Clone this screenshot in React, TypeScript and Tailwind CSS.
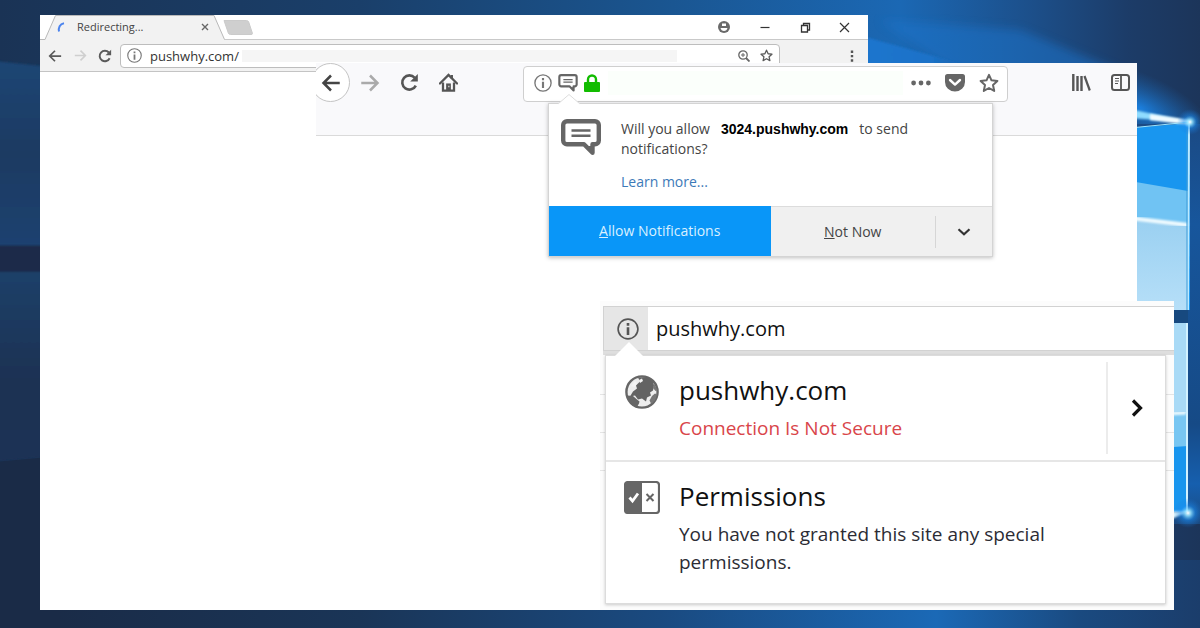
import type { ReactNode } from 'react';

type IconProps = { className?: string };

const UI_FONT = "font-['Open_Sans','Noto_Sans',sans-serif]";

function Wallpaper() {
  return (
    <svg
      className="absolute inset-0 h-full w-full"
      viewBox="0 0 1200 628"
      preserveAspectRatio="none"
      aria-hidden="true"
    >
      <defs>
        <linearGradient id="base" x1="0" x2="1" y1="0" y2="0">
          <stop offset="0" stopColor="#1a3355" />
          <stop offset="0.3" stopColor="#1a3f6a" />
          <stop offset="0.55" stopColor="#1a5590" />
          <stop offset="0.75" stopColor="#1b68b4" />
          <stop offset="0.86" stopColor="#1c4f8a" />
          <stop offset="0.94" stopColor="#1c3c68" />
          <stop offset="1" stopColor="#1c355a" />
        </linearGradient>
        <linearGradient id="bottom" x1="0" x2="1" y1="0" y2="0">
          <stop offset="0" stopColor="#1a2a45" />
          <stop offset="0.3" stopColor="#1a3557" />
          <stop offset="0.55" stopColor="#1a4a80" />
          <stop offset="0.78" stopColor="#1b69b6" />
          <stop offset="0.9" stopColor="#1a4a80" />
          <stop offset="1" stopColor="#1b3d6b" />
        </linearGradient>
        <linearGradient id="leftTop" x1="0" x2="0" y1="0" y2="1">
          <stop offset="0" stopColor="#1b4674" />
          <stop offset="0.5" stopColor="#1a3a62" />
          <stop offset="1" stopColor="#1a4270" />
        </linearGradient>
        <linearGradient id="leftBottom" x1="0" x2="0" y1="0" y2="1">
          <stop offset="0" stopColor="#1a4069" />
          <stop offset="0.6" stopColor="#1a3152" />
          <stop offset="1" stopColor="#1a3355" />
        </linearGradient>
        <linearGradient id="rightEdge" x1="0" x2="0" y1="0" y2="1">
          <stop offset="0" stopColor="#1b4a84" />
          <stop offset="0.25" stopColor="#17569c" />
          <stop offset="0.75" stopColor="#164a86" />
          <stop offset="0.9" stopColor="#165fae" />
          <stop offset="1" stopColor="#1b4a80" />
        </linearGradient>
        <linearGradient id="beam" x1="0" x2="1" y1="0" y2="0">
          <stop offset="0" stopColor="#1b76d0" />
          <stop offset="0.7" stopColor="#1b72c8" />
          <stop offset="1" stopColor="#1b68b4" stopOpacity="0" />
        </linearGradient>
        <linearGradient id="paneBottom" x1="0" x2="0" y1="0" y2="1">
          <stop offset="0" stopColor="#9ad0f1" />
          <stop offset="1" stopColor="#b6dff8" />
        </linearGradient>
        <radialGradient id="glow">
          <stop offset="0" stopColor="#ffffff" />
          <stop offset="0.2" stopColor="#8fe0ff" stopOpacity="0.85" />
          <stop offset="0.5" stopColor="#1b8cf0" stopOpacity="0.5" />
          <stop offset="1" stopColor="#1b76d4" stopOpacity="0" />
        </radialGradient>
        <radialGradient id="haze">
          <stop offset="0" stopColor="#1b86ea" stopOpacity="0.9" />
          <stop offset="1" stopColor="#1b6ab8" stopOpacity="0" />
        </radialGradient>
        <filter id="soft">
          <feGaussianBlur stdDeviation="5" />
        </filter>
        <filter id="slight">
          <feGaussianBlur stdDeviation="1" />
        </filter>
      </defs>
      <rect width="1200" height="628" fill="url(#base)" />
      <rect y="560" width="1200" height="68" fill="url(#bottom)" />

      {/* left pane of the dim window */}
      <path d="M-5 61 L60 68 V246 H-5Z" fill="url(#leftTop)" filter="url(#slight)" />
      <path d="M-5 246 H60 V272 H-5Z" fill="#1b2a48" filter="url(#slight)" />
      <path d="M-5 272 H60 V456 L-5 462Z" fill="url(#leftBottom)" filter="url(#slight)" />
      <path d="M-5 462 L60 456 V640 H-5Z" fill="#1a2b47" />

      {/* light rays */}
      <path d="M880 20 L1020 30 L1130 75 L960 75Z" fill="#1b74cc" opacity="0.5" filter="url(#soft)" />
      <path d="M840 30 L970 66 H840Z" fill="url(#beam)" filter="url(#slight)" />
      <ellipse cx="1140" cy="108" rx="80" ry="34" fill="url(#haze)" transform="rotate(24 1140 108)" />

      {/* lit window panes */}
      <rect x="1130" y="124" width="75" height="400" fill="url(#rightEdge)" />
      <path d="M1130 128 L1190 123 V310 H1130Z" fill="#1996ef" />
      <path d="M1130 181 L1188 191 V310 H1130Z" fill="#70c3f3" />
      <path d="M1130 219 L1188 225 V310 H1130Z" fill="url(#paneBottom)" />
      <path d="M1130 218 L1188 225" stroke="#f2fcff" strokeWidth="4" filter="url(#slight)" />
      <path d="M1189 122 L1188 310" stroke="#bdeaff" strokeWidth="2" />
      <path d="M1187 124 V310" stroke="#3b9ad8" strokeWidth="1" />
      <path d="M1130 310 H1188 V323 H1130Z" fill="#17497f" />
      <path d="M1130 323 H1188 V512 H1130Z" fill="#a9daf6" />
      <path d="M1130 416 L1188 413 V512 H1130Z" fill="#78c6f2" />
      <path d="M1130 450 L1188 446 V512 H1130Z" fill="#1895ee" />
      <path d="M1130 416 L1186 413" stroke="#effbff" strokeWidth="3" filter="url(#slight)" />
      <path d="M1187 323 V512" stroke="#d2f2ff" strokeWidth="2" />
      <path d="M1130 109 L1190 122 L1130 118Z" fill="#8fdcff" filter="url(#slight)" />
      <path d="M1150 114 L1190 120 V125 L1150 120Z" fill="#f0fbff" filter="url(#slight)" />
      <path d="M1130 128 L1190 122" stroke="#9fe6ff" strokeWidth="1" />
      <path d="M1160 524 L1190 511 L1160 512Z" fill="#e5faff" filter="url(#slight)" />
      <circle cx="1190" cy="122" r="13" fill="url(#glow)" />
      <circle cx="1188" cy="513" r="15" fill="url(#glow)" />
    </svg>
  );
}

function Svg({
  className,
  box = '0 0 16 16',
  children,
}: IconProps & { box?: string; children: ReactNode }) {
  return (
    <svg className={`block shrink-0 ${className}`} viewBox={box} fill="none" aria-hidden="true">
      {children}
    </svg>
  );
}

function ArrowLeft({ className }: IconProps) {
  return (
    <Svg className={className}>
      <path d="M15 8H2M8 2 2 8l6 6" stroke="currentColor" strokeWidth="2" />
    </Svg>
  );
}

function ArrowRight({ className }: IconProps) {
  return (
    <Svg className={className}>
      <path d="M1 8h13M8 2l6 6-6 6" stroke="currentColor" strokeWidth="2" />
    </Svg>
  );
}

function Reload({ className }: IconProps) {
  return (
    <Svg className={className}>
      <path d="M13.3 10.6A6 6 0 1 1 12.4 4" stroke="currentColor" strokeWidth="2.2" />
      <path d="M15 0.8V7.2H8.6Z" fill="currentColor" />
    </Svg>
  );
}

function InfoCircle({ className }: IconProps) {
  return (
    <Svg className={className}>
      <circle cx="8" cy="8" r="7.2" stroke="currentColor" strokeWidth="1.2" />
      <path d="M8 3.6v2M8 6.8v5.6" stroke="currentColor" strokeWidth="1.9" />
    </Svg>
  );
}

function Star({ className }: IconProps) {
  return (
    <Svg className={className} box="0 0 20 20">
      <path
        d="m10 1.8 2.5 5.5 5.9.7-4.4 4 1.2 5.9L10 15l-5.2 2.9L6 12 1.6 8l5.9-.7Z"
        stroke="currentColor"
        strokeWidth="2"
        strokeLinejoin="round"
      />
    </Svg>
  );
}

function SpeechBubble({ className }: IconProps) {
  return (
    <Svg className={className} box="0 0 40 37">
      <path
        d="M6 2.2h28a3.8 3.8 0 0 1 3.8 3.8v15.5a3.8 3.8 0 0 1-3.8 3.8h-2.5v8.500l-8.500-8.500H6a3.8 3.8 0 0 1-3.8-3.8V6A3.8 3.8 0 0 1 6 2.2Z"
        stroke="currentColor"
        strokeWidth="4.4"
        strokeLinejoin="round"
      />
      <path d="M26 27h5.500v7Z" fill="currentColor" />
      <path d="M10.5 11.5h19M10.5 16.8h19" stroke="currentColor" strokeWidth="2.4" />
    </Svg>
  );
}

function Globe({ className }: IconProps) {
  return (
    <Svg className={className} box="0 0 34 34">
      <circle cx="17" cy="17" r="15.6" fill="#ededed" stroke="#666" strokeWidth="2.4" />
      <path
        d="M13 2.5 22 2l6 4.5 1 4-1 5-3 2 1 3-4 2-1 4-4-3-4 1-3-4-5 1 3-5 4-3-1-3 4-4Z"
        fill="#636363"
      />
      <path d="m14 5 3-1.500L18 6l-3 2ZM6 11l4-5 2 2-2 4Z" fill="#f4f4f4" />
      <path d="M2.500 20.500l5.500.5 4 3.500 2.500 2-.5 2-2 3.500-5-2-4-5Z" fill="#666" />
      <path d="M27 21l3-2.500 2 1-2 6-4 3-1.500-3Z" fill="#777" />
      <path d="M29 8.500 32.500 15l-2 1-2.500-3Z" fill="#777" />
    </Svg>
  );
}

function ChromeWindow() {
  return (
    <section
      className={`absolute top-[15px] right-[332px] bottom-[18px] left-10 bg-white text-[#5a5a5a] ${UI_FONT}`}
    >
      <div className="flex h-[25px] items-center border-b border-[#c9c9c9]">
        <div className="relative flex h-[25px] w-[185px] shrink-0 items-center px-4">
          <svg className="absolute inset-0" width="185" height="25" viewBox="0 0 185 25" aria-hidden="true">
            <path d="M0 24.5H5L15.5 0H174L184.5 24.5V25H0Z" fill="#f2f2f2" />
            <path d="M0 24.5H5L15.5 0.5H174L184.5 24.5" fill="none" stroke="#b9b9b9" />
          </svg>
          <Svg className="relative size-3" box="0 0 12 12">
            <path d="M3 10.5C2.2 7 3.8 3 8 2.3" stroke="#4c84ee" strokeWidth="2" />
          </Svg>
          <span className="relative ml-[9px] flex-1 text-[11px] leading-4 text-[#444]">Redirecting...</span>
          <button type="button" aria-label="Close tab" className="relative">
            <Svg className="size-2" box="0 0 8 8">
              <path d="m1 1 6 6m0-6-6 6" stroke="#666" strokeWidth="1.4" />
            </Svg>
          </button>
        </div>
        <button type="button" aria-label="New tab" className="-ml-0.5 shrink-0">
          <Svg className="h-[15px] w-[30px]" box="0 0 30 15">
            <path
              d="M1 .5H23.5Q25 .5 25.7 2L29.5 13.5Q29.5 14.5 28 14.5H7.5Q6 14.5 5.300 13Z"
              fill="#cfcfcf"
              stroke="#cacaca"
            />
          </Svg>
        </button>
        <div className="ml-auto flex items-center gap-7 pr-[18px] text-[#333]">
          <button type="button" aria-label="Profile">
            <Svg className="size-3" box="0 0 12 12">
              <circle cx="6" cy="6" r="6" fill="#6a6a6a" />
              <path d="M4 2.500h4v2.500H4Z" fill="#fff" />
              <path d="M2.500 7h7q-.8 3-3.500 3T2.500 7Z" fill="#fff" />
            </Svg>
          </button>
          <button type="button" aria-label="Minimize" className="px-0.5">
            <Svg className="size-[10px]" box="0 0 10 10">
              <path d="M.5 5.5h9" stroke="currentColor" strokeWidth="1.2" />
            </Svg>
          </button>
          <button type="button" aria-label="Restore">
            <Svg className="size-[11px]" box="0 0 11 11">
              <path d="M1.5 3.5h6v6.5h-6ZM3.5 3.5v-2h6v6.5h-2" stroke="currentColor" strokeWidth="1.3" />
            </Svg>
          </button>
          <button type="button" aria-label="Close">
            <Svg className="size-[11px]" box="0 0 11 11">
              <path d="m1 1 9 9m0-9-9 9" stroke="currentColor" strokeWidth="1.2" />
            </Svg>
          </button>
        </div>
      </div>

      <div className="flex h-8 items-center border-b border-[#c4c4c4] bg-[#f2f2f2] pl-2">
        <button type="button" aria-label="Back">
          <ArrowLeft className="size-[14px]" />
        </button>
        <button type="button" aria-label="Forward" className="ml-3 text-[#cfcfcf]">
          <ArrowRight className="size-[13px]" />
        </button>
        <button type="button" aria-label="Reload" className="ml-[11px]">
          <Reload className="size-[14px]" />
        </button>
        <div className="ml-2 flex h-6 flex-1 items-center rounded-sm border border-[#bdbdbd] bg-white px-1.5">
          <InfoCircle className="size-[15px] text-[#777]" />
          <input
            aria-label="Address"
            defaultValue="pushwhy.com/"
            className="ml-2 w-[92px] bg-transparent text-[13px] leading-5 text-[#333] outline-none"
          />
          <span className="h-3 flex-1 bg-[#f5f5f5]" />
          <button type="button" aria-label="Zoom" className="ml-[61px]">
            <Svg className="size-3" box="0 0 12 12">
              <circle cx="5" cy="5" r="4.2" stroke="#666" strokeWidth="1.3" />
              <path d="M8 8l3.5 3.5" stroke="#666" strokeWidth="1.8" />
              <path d="M3 5h4M5 3v4" stroke="#666" />
            </Svg>
          </button>
          <button type="button" aria-label="Bookmark" className="ml-2.5">
            <Star className="size-[13px]" />
          </button>
        </div>
        <button type="button" aria-label="Menu" className="mr-[14px] ml-[70px]">
          <Svg className="h-3 w-1" box="0 0 4 12">
            <path d="M.8.5h2.4v2.4H.8ZM.8 4.900h2.4v2.4H.8ZM.8 9.300h2.4v2.4H.8Z" fill="#555" />
          </Svg>
        </button>
      </div>
    </section>
  );
}

function NotificationPrompt() {
  return (
    <div
      role="dialog"
      aria-label="Notification permission"
      className="absolute top-10 right-36 left-[232px] border border-[#d4d4d4] bg-white text-sm text-[#444] shadow-[0_1px_4px_rgba(0,0,0,0.25)]"
    >
      <svg className="absolute -top-[10px] left-[9px]" width="22" height="11" viewBox="0 0 22 11" aria-hidden="true">
        <path d="M0 10 11 0l11 10v1H0Z" fill="#fff" />
        <path d="M0 10 11 .5 22 10" fill="none" stroke="#ddd" />
      </svg>
      <div className="flex pt-[15px] pb-3.5 pl-3">
        <SpeechBubble className="h-[37px] w-10 text-[#666]" />
        <div className="ml-5">
          <p className="flex gap-x-[11px] leading-5">
            <span>Will you allow</span>
            <b className="font-['Liberation_Sans',Arial,sans-serif] text-black">3024.pushwhy.com</b>
            <span>to send</span>
          </p>
          <p className="leading-5">notifications?</p>
          <a href="#learn-more" className="mt-[13px] block leading-5 text-[#3d7ab8]">
            Learn more...
          </a>
        </div>
      </div>
      <div className="flex h-[50px] bg-[#f0f0f0]">
        <button type="button" className="flex-1 bg-[#0996f8] text-[#d9f0ff]">
          <u>A</u>llow Notifications
        </button>
        <div className="flex flex-1 items-center border-t border-[#dcdcdc]">
          <button type="button" className="h-full flex-1">
            <u>N</u>ot Now
          </button>
          <button
            type="button"
            aria-label="More options"
            className="flex h-8 w-[57px] items-center justify-center border-l border-[#d6d6d6]"
          >
            <Svg className="h-2 w-3.5" box="0 0 14 8">
              <path d="m1.5 1.2 5.5 5 5.5-5" stroke="#333" strokeWidth="2.2" />
            </Svg>
          </button>
        </div>
      </div>
    </div>
  );
}

function FirefoxWindow() {
  return (
    <section className={`absolute top-[63px] right-[63px] left-[316px] h-[260px] bg-white text-[#555] ${UI_FONT}`}>
      <div className="flex h-[73px] items-start overflow-hidden border-b border-[#dadada] bg-[#f9f9fb]">
        <button
          type="button"
          aria-label="Back"
          className="-ml-[5px] flex size-[39px] shrink-0 items-center justify-center rounded-full border border-[#c4c4c4] bg-white text-[#444]"
        >
          <ArrowLeft className="size-5" />
        </button>
        <div className="flex h-[39px] shrink-0 items-center gap-5">
          <button type="button" aria-label="Forward" className="ml-2.5 text-[#aaa]">
            <ArrowRight className="size-5" />
          </button>
          <button type="button" aria-label="Reload">
            <Reload className="size-[19px]" />
          </button>
          <button type="button" aria-label="Home">
            <Svg className="size-[19px]" box="0 0 20 20">
              <path d="M1 11 10 2l9 9" stroke="currentColor" strokeWidth="2.4" strokeLinecap="round" />
              <path d="M4.2 10v8.5h11.600V10M13.500 2v4" stroke="currentColor" strokeWidth="2.4" />
              <path d="M7.500 11h5v7h-5Z" fill="currentColor" />
              <path d="M9.700 13.500H11v1.500H9.700Z" fill="#ddd" />
            </Svg>
          </button>
        </div>
        <div className="mt-[3px] ml-[65px] flex h-9 flex-1 items-center rounded-sm border border-[#cfcfcf] bg-white pr-2 pb-0.5 pl-2.5">
          <InfoCircle className="size-[18px] text-[#777]" />
          <SpeechBubble className="ml-1.5 h-[18px] w-5 text-[#666]" />
          <Svg className="ml-1.5 h-[18px] w-4" box="0 0 16 18">
            <path d="M4 9V5.500a4 4 0 0 1 8 0V9" stroke="#12bc00" strokeWidth="2.4" />
            <rect y="8" width="16" height="10" rx="1" fill="#12bc00" />
          </Svg>
          <input aria-label="Address" className="mx-2 h-6 min-w-0 flex-1 bg-[#fbfffb] outline-none" />
          <button type="button" aria-label="Page actions">
            <Svg className="h-1.5 w-5" box="0 0 20 6">
              <circle cx="2.6" cy="3" r="2.4" fill="#666" />
              <circle cx="10" cy="3" r="2.4" fill="#666" />
              <circle cx="17.4" cy="3" r="2.4" fill="#666" />
            </Svg>
          </button>
          <button type="button" aria-label="Save to Pocket" className="ml-3.5">
            <Svg className="h-[18px] w-5" box="0 0 20 18">
              <path
                d="M2.5 0h15A2.5 2.5 0 0 1 20 2.5V8A10 9.500 0 0 1 0 8V2.5A2.5 2.5 0 0 1 2.5 0Z"
                fill="#666"
              />
              <path
                d="m5 6 5 4.600L15 6"
                stroke="#fff"
                strokeWidth="2.4"
                strokeLinecap="round"
                strokeLinejoin="round"
              />
            </Svg>
          </button>
          <button type="button" aria-label="Bookmark" className="ml-3.5">
            <Star className="size-5 text-[#666]" />
          </button>
        </div>
        <div className="flex h-[39px] shrink-0 items-center gap-5 pr-[7px] pl-16">
          <button type="button" aria-label="Library">
            <Svg className="h-[17px] w-[19px]" box="0 0 19 17">
              <path d="M1.300 0v17M5.500 2v15M9.500 2v15" stroke="currentColor" strokeWidth="2.4" />
              <path d="m12.500 2 5.300 14.500" stroke="currentColor" strokeWidth="2.2" />
            </Svg>
          </button>
          <button type="button" aria-label="Sidebars">
            <Svg className="h-[17px] w-[19px]" box="0 0 19 17">
              <rect x="1" y="1" width="17" height="15" rx="2.5" stroke="currentColor" strokeWidth="2" />
              <path d="M10 1v15" stroke="currentColor" strokeWidth="1.8" />
              <path d="M4 4.500h4M4 7h4M4 9.500h3" stroke="currentColor" strokeWidth="1.1" />
            </Svg>
          </button>
        </div>
      </div>
      <NotificationPrompt />
    </section>
  );
}

function SiteInfoWindow() {
  return (
    <section
      className={`absolute top-[301px] right-[26px] left-1/2 bg-[#fcfcfc] pt-[5px] pb-1.5 text-[#111] ${UI_FONT}`}
    >
      {/* page rules that show on both sides of the panel */}
      <div className="absolute inset-x-0 top-[93px] h-[77px] border-y border-[#e4e4e4]">
        <div className="mt-[37px] border-t border-[#e4e4e4]" />
      </div>
      <div className="ml-[3px] flex h-[45px] items-center border-t border-b border-l border-[#d2d2d2] bg-white">
        <div className="flex h-full w-11 items-center justify-center bg-[#e6e6e6] pl-1">
          <InfoCircle className="size-[22px] text-[#555]" />
        </div>
        <input
          aria-label="Address"
          defaultValue="pushwhy.com"
          className="ml-2 min-w-0 flex-1 bg-transparent text-xl leading-7 outline-none"
        />
      </div>
      <div className="ml-[3px] h-1 bg-[#dedede]" />
      <div className="relative mr-2 ml-[5px] border border-[#dcdcdc] bg-white shadow-[0_1px_3px_rgba(0,0,0,0.2)]">
        <svg className="absolute -top-[14px] left-[9px]" width="28" height="15" viewBox="0 0 28 15" aria-hidden="true">
          <path d="M0 14 14 0l14 14v1H0Z" fill="#fff" />
        </svg>
        <div className="flex h-[106px] items-center border-b-2 border-[#e6e6e6]">
          <Globe className="-mt-8 ml-[19px] size-[34px]" />
          <div className="ml-5 flex-1">
            <h2 className="text-[26px] leading-9">pushwhy.com</h2>
            <p className="mt-1 text-[19px] leading-8 text-[#d9454a]">Connection Is Not Secure</p>
          </div>
          <button
            type="button"
            aria-label="Show connection details"
            className="flex h-[92px] w-[59px] items-center justify-center border-l-2 border-[#ececec]"
          >
            <Svg className="h-[18px] w-3" box="0 0 12 18">
              <path d="m2 1.5 7.5 7.5L2 16.5" stroke="#111" strokeWidth="3.2" />
            </Svg>
          </button>
        </div>
        <div className="flex h-[141px] pt-4">
          <Svg className="mt-[3px] ml-[18px] h-[33px] w-9" box="0 0 36 33">
            <rect x="1" y="1" width="34" height="31" rx="3" fill="#fff" stroke="#666" strokeWidth="2.2" />
            <path d="M2 2h16v29H2Z" fill="#666" />
            <path d="m5.5 16.5 3 3.5 5.5-7.5" stroke="#fff" strokeWidth="2.8" />
            <path d="m22.5 13 7 7m0-7-7 7" stroke="#666" strokeWidth="2" />
          </Svg>
          <div className="ml-[19px]">
            <h2 className="text-[26px] leading-9">Permissions</h2>
            <p className="mt-1.5 max-w-[400px] text-[19px] leading-7 text-[#2c2c34]">
              You have not granted this site any special permissions.
            </p>
          </div>
        </div>
      </div>
    </section>
  );
}

export default function App() {
  return (
    <main className="relative min-h-screen overflow-hidden bg-[#1a3355]">
      <Wallpaper />
      <ChromeWindow />
      <FirefoxWindow />
      <SiteInfoWindow />
    </main>
  );
}
